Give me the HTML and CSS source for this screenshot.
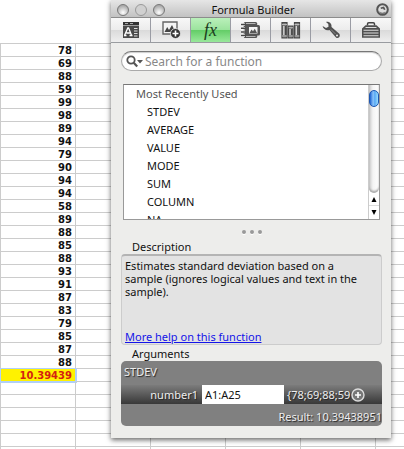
FILE: index.html
```html
<!DOCTYPE html>
<html lang="en">
<head>
<meta charset="utf-8">
<title>Formula Builder</title>
<link rel="stylesheet" href="styles.css">
</head>
<body>
<table class="sheet">
<colgroup><col class="first"><col class="col"><col class="col"><col class="col"><col class="col"><col></colgroup>
<tbody>
<tr><td>78<td><td><td><td><td></tr>
<tr><td>69<td><td><td><td><td></tr>
<tr><td>88<td><td><td><td><td></tr>
<tr><td>59<td><td><td><td><td></tr>
<tr><td>99<td><td><td><td><td></tr>
<tr><td>98<td><td><td><td><td></tr>
<tr><td>89<td><td><td><td><td></tr>
<tr><td>94<td><td><td><td><td></tr>
<tr><td>79<td><td><td><td><td></tr>
<tr><td>90<td><td><td><td><td></tr>
<tr><td>94<td><td><td><td><td></tr>
<tr><td>94<td><td><td><td><td></tr>
<tr><td>58<td><td><td><td><td></tr>
<tr><td>89<td><td><td><td><td></tr>
<tr><td>88<td><td><td><td><td></tr>
<tr><td>85<td><td><td><td><td></tr>
<tr><td>88<td><td><td><td><td></tr>
<tr><td>93<td><td><td><td><td></tr>
<tr><td>91<td><td><td><td><td></tr>
<tr><td>87<td><td><td><td><td></tr>
<tr><td>83<td><td><td><td><td></tr>
<tr><td>79<td><td><td><td><td></tr>
<tr><td>85<td><td><td><td><td></tr>
<tr><td>87<td><td><td><td><td></tr>
<tr><td>88<td><td><td><td><td></tr>
<tr><td class="selected">10.39439<td><td><td><td><td></tr>
<tr><td><td><td><td><td><td></tr>
<tr><td><td><td><td><td><td></tr>
<tr><td><td><td><td><td><td></tr>
<tr><td><td><td><td><td><td></tr>
<tr><td><td><td><td><td><td></tr>
<tr><td><td><td><td><td><td></tr>
</tbody>
</table>

<section class="panel" aria-label="Formula Builder">
<header class="titlebar">
<div class="lights">
<button class="light" aria-label="Close"></button>
<button class="light plain" aria-label="Minimize"></button>
<button class="light" aria-label="Zoom"></button>
</div>
<h1 class="title">Formula Builder</h1>
<button class="flip" aria-label="Settings">
<svg width="13" height="13" viewBox="0 0 13 13"><circle cx="6.5" cy="6.5" r="5.300" fill="#ddd" stroke="#555" stroke-width="2"/><path d="M4.500 4.500 8 3.500l1.500 3-1.500.5-1-1.500-2 .5z" fill="#555"/><path d="M3 8q3 3 6.500.5L8 11H5z" fill="#777"/></svg>
</button>
</header>
<nav class="tabs">
<button class="tab" aria-label="Formatting">
<svg width="18" height="18" viewBox="0 0 18 18"><path d="M1 1h16v3H1z" fill="#333"/><path d="M3 2.500h3M8 2.500h3" stroke="#aaa"/><path d="M1 4.500h16V17H1z" fill="#4a4a4a"/><path d="M2.500 14.500 5.800 7h.8l3 7.500M4.300 12h4M2 14.500h2.500m3 0h3" fill="none" stroke="#fff" stroke-width="1.300"/><path d="M12 7.500h3.500M12 10h3.500M12 12.500h3.500M12 15h3.500" stroke="#eee" stroke-width=".9"/></svg>
</button>
<button class="tab" aria-label="Object palette">
<svg width="20" height="18" viewBox="0 0 20 18"><path d="M2 1h14v12H2z" fill="#f4f4f4" stroke="#666" stroke-width="1.400"/><path d="m3.500 11 2.700-5L8 9l3-5 3.500 7z" fill="#444"/><circle cx="14.500" cy="12.500" r="5" fill="#333" stroke="#eee" stroke-width=".8"/><path d="M14.500 9.500v6m-3-3h6" stroke="#fff" stroke-width="1.600"/></svg>
</button>
<button class="tab active" aria-label="Formula Builder"><span class="fx">fx</span></button>
<button class="tab" aria-label="Scrapbook">
<svg width="20" height="18" viewBox="0 0 20 18"><rect x="2.700" y="1" width="13.500" height="16" rx="1.500" fill="#555"/><path d="M5 2.500h9.500M5 15.500h9.500" stroke="#ccc" stroke-width=".8"/><rect x="5.500" y="4" width="13.500" height="10.500" rx="1.500" fill="#555"/><path d="M8 6h8.500v6.500H8z" fill="#f2f2f2"/><path d="m8.500 12 2-3.500 1.500 1.700 1.800-2.500L16 12z" fill="#555"/><path d="M0 3.500h4M0 7.200h4M0 10.900h4M0 14.600h4" stroke="#fff" stroke-width="2.600"/><path d="M0 3.500h4.500M0 7.200h4.500M0 10.900h4.500M0 14.600h4.500" stroke="#444" stroke-width="1.500"/></svg>
</button>
<button class="tab" aria-label="Reference tools">
<svg width="20" height="18" viewBox="0 0 20 18"><path d="M1 1.500h5V17H1zM7.500 5H12v12H7.500zM13.500 1.500h5V17h-5z" fill="#777" stroke="#484848" stroke-width="1.200"/><path d="M2.800 5v9M9 8v6M15.300 5v9" stroke="#ddd" stroke-width="1.200"/><path d="M4.600 5v9M10.700 8v6M17 5v9" stroke="#444"/><path d="M1 3.500h5M7.500 6.700H12M13.500 3.500h5M1 15h5M7.500 15H12M13.500 15h5" stroke="#ccc" stroke-width=".8"/></svg>
</button>
<button class="tab" aria-label="Compatibility report">
<svg width="20" height="18" viewBox="0 0 20 18"><path d="M5 1c3-.8 6 1.500 5.500 5l7.500 6.500c1.500 1.400.8 4.500-1.500 4.500-1 0-1.600-.4-2.200-1.200L8.500 9C5.500 10 2 8.200 1.600 5L5 7l2.500-1.200L7.300 3z" fill="#505050"/><circle cx="16" cy="14.500" r="1" fill="#eee"/><path d="m10 8.500 4.500 4.500" stroke="#999" stroke-width=".8"/></svg>
</button>
<button class="tab" aria-label="Project palette">
<svg width="20" height="18" viewBox="0 0 20 18"><path d="M6.500 4.500V3q0-1.300 1.300-1.300h4.400q1.300 0 1.300 1.300v1.500" fill="none" stroke="#444" stroke-width="1.500"/><path d="m4.500 4.200h11L19 7.500v9.300H1V7.500z" fill="#505050"/><path d="M4.500 6.500h11M2.500 9.300h15M2.500 12h15M2.500 14.700h15" stroke="#ddd" stroke-width="1.100"/></svg>
</button>
</nav>

<div class="content">
<label class="search">
<svg width="17" height="13" viewBox="0 0 17 13"><circle cx="5" cy="5" r="3.700" fill="none" stroke="#555" stroke-width="1.800"/><path d="m7.700 7.700 3.500 3.800" stroke="#555" stroke-width="2.200"/><path d="M11 5h6l-3 3.500z" fill="#555"/></svg>
<input type="search" placeholder="Search for a function" aria-label="Search for a function">
</label>

<div class="listbox">
<ul class="functions">
<li class="group">Most Recently Used</li>
<li>STDEV</li>
<li>AVERAGE</li>
<li>VALUE</li>
<li>MODE</li>
<li>SUM</li>
<li>COLUMN</li>
<li>NA</li>
</ul>
<div class="scrollbar">
<div class="track"><div class="thumb"></div></div>
<button class="arrow" aria-label="Scroll up"><svg width="6" height="5" viewBox="0 0 6 5"><path d="M3 0l2.500 5h-5z"/></svg></button>
<button class="arrow" aria-label="Scroll down"><svg width="6" height="5" viewBox="0 0 6 5"><path d="M3 5L.5 0h5z"/></svg></button>
</div>
</div>

<div class="grip"><i></i><i></i><i></i></div>

<h2 class="heading">Description</h2>
<div class="description">
<p>Estimates standard deviation based on a sample (ignores logical values and text in the sample).</p>
<a href="#help">More help on this function</a>
</div>

<h2 class="heading">Arguments</h2>
<div class="arguments">
<div class="name">STDEV</div>
<div class="argument">
<label for="number1">number1</label>
<input id="number1" type="text" value="A1:A25">
<span class="values">{78;69;88;59</span>
<button class="add" aria-label="Add argument"><svg width="14" height="14" viewBox="0 0 14 14"><circle cx="7" cy="7" r="6" fill="#777" stroke="#ddd" stroke-width="1.400"/><path d="M7 4v6M4 7h6" stroke="#fff" stroke-width="1.600"/></svg></button>
</div>
<div class="result">Result: 10.39438951</div>
</div>
</div>
</section>
</body>
</html>
```

FILE: styles.css
```css
* { box-sizing: border-box; }

body {
  margin: 0;
  height: 100vh;
  overflow: hidden;
  position: relative;
  background: #fff;
  color: #111;
  font: 11px/13px "Noto Sans", "Open Sans", sans-serif;
}

button, input { font: inherit; color: inherit; margin: 0; padding: 0; border: 0; background: none; }
h1, h2, p, ul { margin: 0; padding: 0; font: inherit; }
svg { display: block; }

.sheet {
  width: 100%;
  margin-top: 43px;
  table-layout: fixed;
  border-collapse: separate;
  border-spacing: 0;
  border-top: 1px solid #ccc;
  border-left: 1px solid #ccc;
  font: bold 10px/11px "DejaVu Sans", sans-serif;
}
.first, .col { width: 75px; }
.sheet td {
  height: 13px;
  padding: 1px 3px 0 0;
  border-right: 1px solid #ccc;
  border-bottom: 1px solid #ccc;
  text-align: right;
}
.sheet td:last-child { border-right: 0; }
.sheet .selected {
  background: #fff200;
  color: #d41f10;
  border-color: #b0d0f8;
  box-shadow: 0 0 0 1px #b0d0f8;
}

.panel {
  position: absolute;
  top: 0;
  left: 111px;
  right: 13px;
  background: #ededeb;
  box-shadow: 0 2px 5px rgba(0, 0, 0, .6);
}

.titlebar {
  display: grid;
  grid-template-columns: 60px 1fr 60px;
  align-items: center;
  height: 18px;
  padding: 2px 2px 0 6px;
  background: linear-gradient(#e6e6e6, #c2c2c2);
  border-bottom: 1px solid #8c8c8c;
}
.lights { display: flex; gap: 6px; }
.light {
  width: 12px;
  height: 12px;
  border: 1px solid #777;
  border-radius: 50%;
  background: radial-gradient(circle at 50% 75%, #fff, #aaa 75%);
}
.plain { border-color: #999; background: #d0d0d0; }
.title { text-align: center; white-space: nowrap; }
.flip { justify-self: end; }

.tabs {
  display: grid;
  grid-template-columns: repeat(7, 1fr);
  height: 25px;
  border-bottom: 1px solid #999ca0;
}
.tab {
  display: flex;
  align-items: center;
  justify-content: center;
  border-right: 1px solid #9a9ca4;
  background: linear-gradient(#f8f8f8, #ececec 50%, #dadada 50%, #eee);
}
.tab:last-child { border-right: 0; }
.active { background: linear-gradient(#baf0bb, #9be39d 50%, #62cc66 50%, #98e89a); }
.fx { font: italic 18px/18px "Liberation Serif", serif; color: #1c3c20; }

.content { padding: 8px 9px 12px 10px; }

.search {
  display: flex;
  align-items: center;
  gap: 2px;
  height: 20px;
  padding: 0 8px 0 4px;
  border: 1px solid #aaa;
  border-top-color: #777;
  border-radius: 10px;
  background: #fff;
  box-shadow: inset 0 1px 1px #ccc;
}
.search input { flex: 1; min-width: 0; outline: 0; font-size: 12px; appearance: none; }
.search input::placeholder { color: #888; }

.listbox {
  display: flex;
  height: 136px;
  margin: 13px 2px 0;
  border: 1px solid #999;
  border-top-color: #777;
  background: #fff;
}
.functions { flex: 1; overflow: hidden; list-style: none; line-height: 18px; }
.functions li { padding-left: 23px; }
.functions .group { padding-left: 12px; color: #555; }

.scrollbar {
  display: flex;
  flex-direction: column;
  width: 11px;
  border-left: 1px solid #ccc;
}
.track {
  flex: 1;
  padding-top: 5px;
  border-radius: 0 0 5px 5px;
  background: linear-gradient(90deg, #ccc, #f4f4f4 40%, #fff);
  box-shadow: inset 0 -2px 2px #aaa;
}
.thumb {
  height: 17px;
  border: 1px solid #1e56b0;
  border-radius: 5px;
  background: linear-gradient(90deg, #1c62d2, #8cc4fa 40%, #58a8f4 60%, #9ce0ff);
}
.arrow { display: flex; align-items: center; justify-content: center; height: 13px; border-bottom: 1px solid #ddd; }
.arrow:last-child { border: 0; }

.grip { display: flex; justify-content: center; gap: 4px; padding: 10px 0 4px; }
.grip i { width: 4px; height: 4px; border-radius: 50%; background: #999; box-shadow: 0 1px #fff; }

.heading { padding: 2px 0 1px 11px; line-height: 13px; }
.description {
  display: flex;
  flex-direction: column;
  justify-content: space-between;
  height: 91px;
  padding: 3px 12px 1px 3px;
  border: 1px solid #ccc;
  border-top: 2px solid #b4b4b4;
  border-radius: 4px;
  background: #e3e3e3;
}
.description a { color: #1414e8; }

.arguments {
  padding: 3px 0 2px;
  border-radius: 5px;
  background: #808080;
  color: #eee;
  text-shadow: 1px 1px 1px #222;
}
.name { padding-left: 3px; line-height: 15px; }
.argument {
  display: grid;
  grid-template-columns: 81px 82px 67px 1fr;
  align-items: center;
  height: 19px;
  margin-top: 6px;
  background: linear-gradient(#7c7c7c, #383838);
}
.argument label { padding-right: 4px; text-align: right; }
.argument input { min-width: 0; height: 19px; padding: 0 3px; background: #fff; color: #111; text-shadow: none; }
.values { padding-left: 3px; overflow: hidden; white-space: nowrap; }
.add { justify-self: start; }
.result { padding-top: 5px; line-height: 15px; text-align: right; }
```
